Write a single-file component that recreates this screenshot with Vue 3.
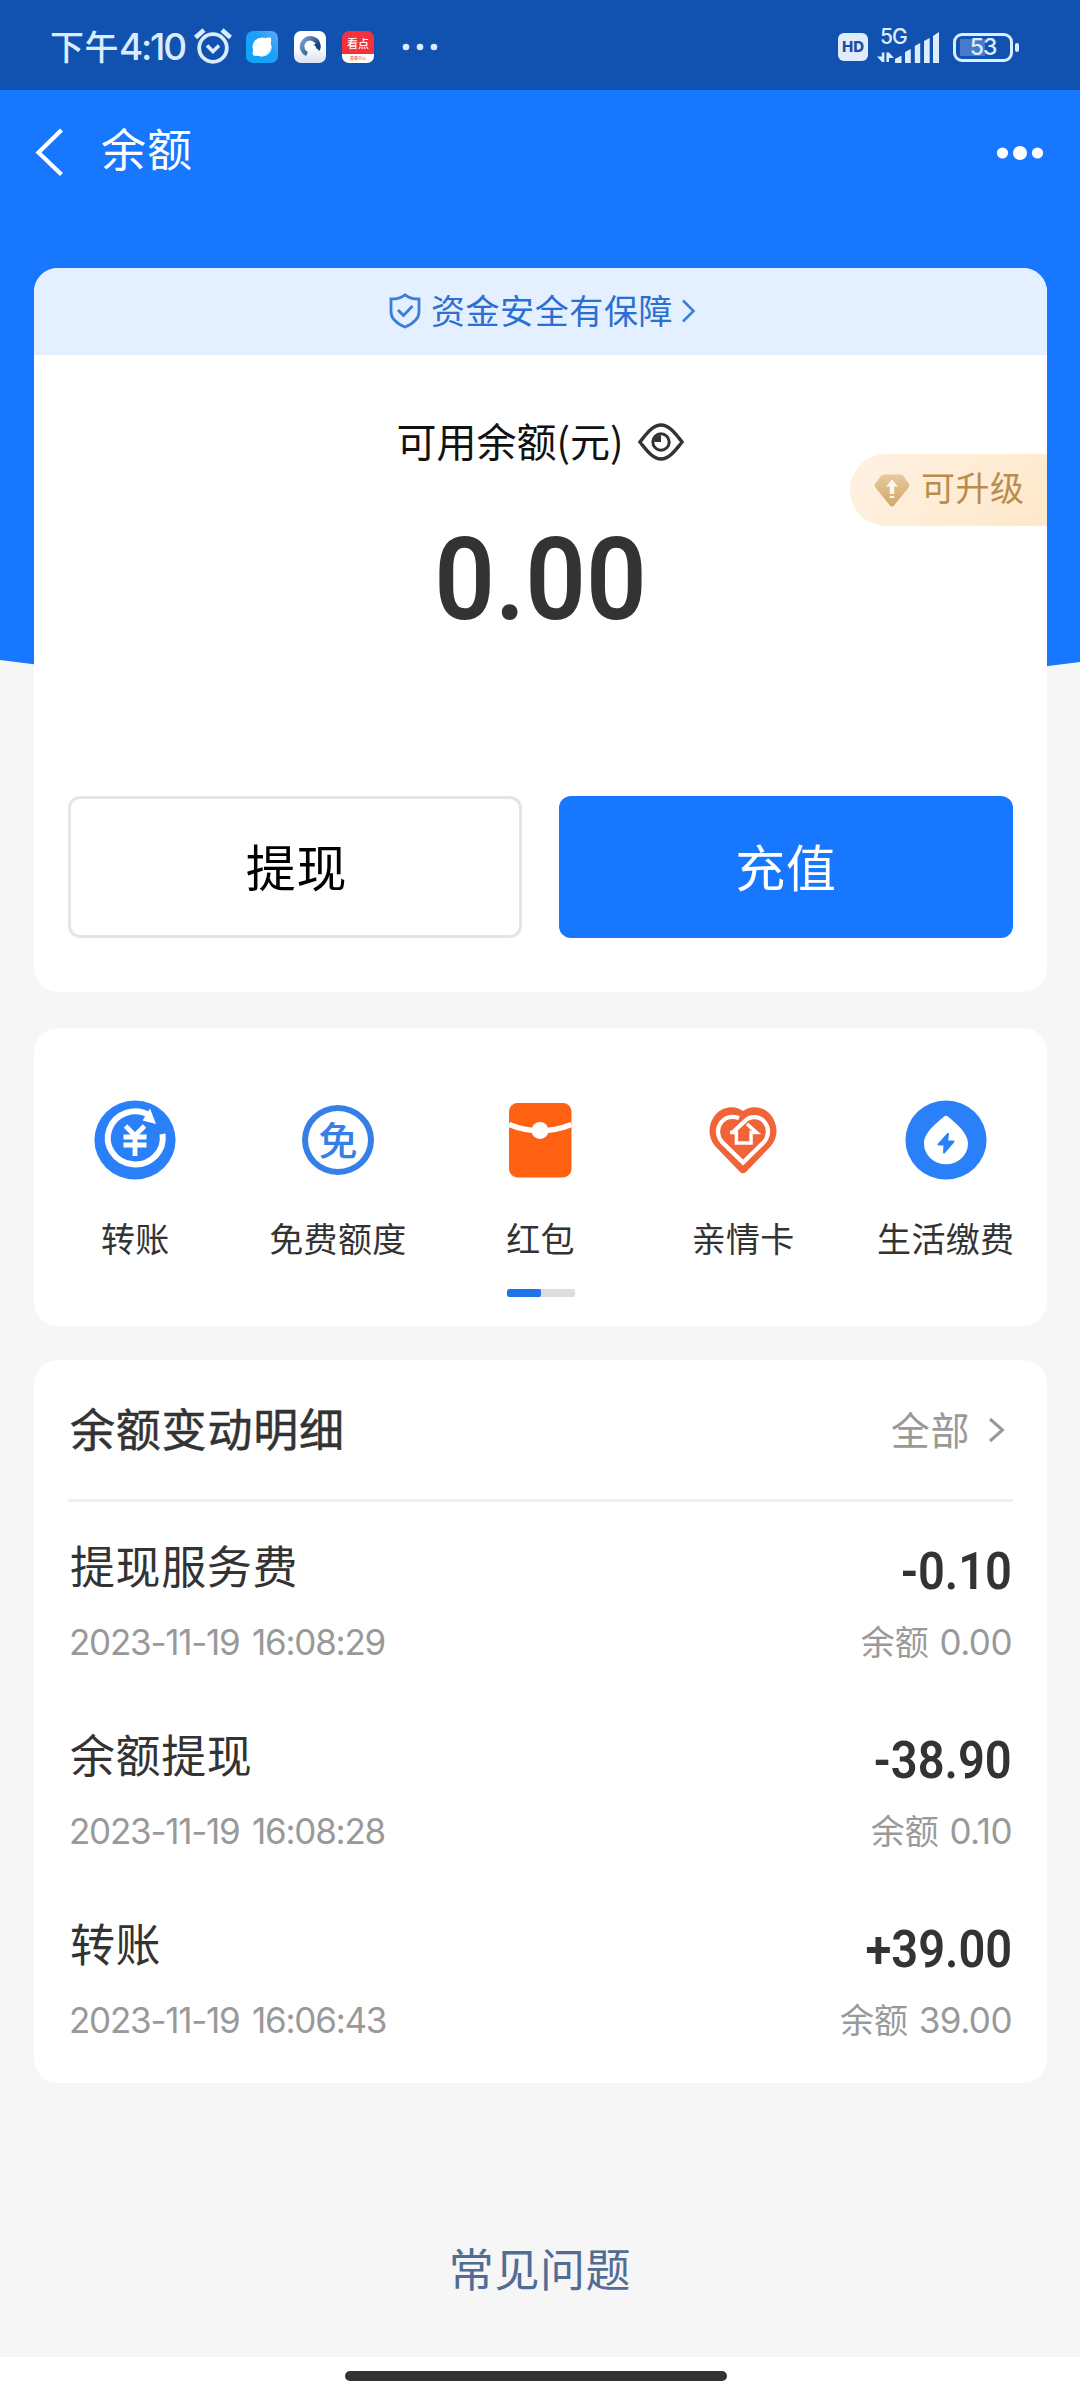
<script setup>
const entries = [
  { title: '提现服务费', time: '2023-11-19 16:08:29', amount: '-0.10', balance: '0.00' },
  { title: '余额提现', time: '2023-11-19 16:08:28', amount: '-38.90', balance: '0.10' },
  { title: '转账', time: '2023-11-19 16:06:43', amount: '+39.00', balance: '39.00' },
]
</script>

<template>
  <div class="page">
    <svg class="hero" width="1080" height="700" viewBox="0 0 1080 700">
      <path d="M0 0H1080V662Q540 732 0 660Z" fill="#1777ff" />
    </svg>

    <div class="status">
      <div class="status-left">
        <span class="clock">下午<span class="clock-num">4:10</span></span>
        <svg class="alarm" width="38" height="36" viewBox="0 0 38 36" fill="none" stroke="#dcecff">
          <circle cx="19" cy="20" r="13.800" stroke-width="3.800" />
          <path d="M1.500 9.500 10 2M36.500 9.500 28 2" stroke-width="4.600" />
          <path d="M13 17.500l6 6 6-6" stroke-width="3.600" />
        </svg>
        <svg class="app" width="32" height="32" viewBox="0 0 32 32">
          <defs>
            <linearGradient id="ga" x1="0" y1="1" x2="1" y2="0"><stop offset="0" stop-color="#0ca6fb" /><stop offset=".6" stop-color="#1f9ef9" /><stop offset="1" stop-color="#63acfa" /></linearGradient>
            <linearGradient id="gb" x1="0" y1="0" x2="0" y2="1"><stop offset=".5" stop-color="#fff" /><stop offset="1" stop-color="#d8e0f0" /></linearGradient>
            <linearGradient id="gc" x1="0" y1="0" x2="1" y2=".6"><stop offset="0" stop-color="#7da3cc" /><stop offset="1" stop-color="#123f80" /></linearGradient>
          </defs>
          <rect width="32" height="32" rx="7" fill="url(#ga)" />
          <circle cx="16" cy="16" r="9.600" fill="#fff" />
          <path d="M7 19.500c-.6 2.500-.5 4 .5 5 2 .8 4 .3 6 .3zM19 7c2.500 0 4-.6 5.800-.3 .6 1.600.2 3.500.2 5.500z" fill="#fff" />
          <path d="M25.600 14c1 7-5 12-12.500 11.500 7-1 10.500-5 12.500-11.500z" fill="#c8e8ff" />
        </svg>
        <svg class="app" width="32" height="32" viewBox="0 0 32 32">
          <rect width="32" height="32" rx="7" fill="url(#gb)" />
          <path d="M13 23A8.200 8.200 0 1 1 24 18" fill="none" stroke="url(#gc)" stroke-width="4.600" />
          <path d="M19 14C22 14.500 23.500 17 25 20.500 26.600 18 26.600 15 25 12z" fill="#17427f" />
        </svg>
        <div class="news"><b>看点</b><i>青春中心</i></div>
        <svg class="more" width="36" height="8" viewBox="0 0 36 8" fill="#dcecff"><circle cx="4" cy="4" r="3.300" /><circle cx="18" cy="4" r="3.300" /><circle cx="32" cy="4" r="3.300" /></svg>
      </div>
      <div class="status-right">
        <span class="hd">HD</span>
        <div class="signal">
          <svg width="64" height="34" viewBox="0 0 64 34" fill="#dcecff">
            <path d="M4.800 22.500V32h2.600V22.500zM0 26.500l5 5.500V26.500zM9.400 22.500H12V32H9.400zM12 22.500l5 5.500h-5z" />
            <path d="M18 33v-4l6.500-3.500V33zM28 33V22l5.800-3v14zM37.800 33V16l5.400-3v20zM47 33V11l5.700-3v25zM56 33V6l6-4v31z" />
          </svg>
          <span class="net">5G</span>
        </div>
        <div class="battery"><span>53</span></div>
      </div>
    </div>

    <header class="nav">
      <svg class="back" width="30" height="50" viewBox="0 0 30 50" fill="none" stroke="#fff" stroke-width="4.200"><path d="M26.500 3 3.500 25.500 26.500 47.500" /></svg>
      <h1>余额</h1>
      <svg width="48" height="16" viewBox="0 0 48 16" fill="#fff"><circle cx="6.500" cy="8" r="5.600" /><circle cx="24" cy="8" r="7" /><circle cx="41.500" cy="8" r="5.600" /></svg>
    </header>

    <section class="card balance">
      <div class="secure">
        <svg width="32" height="36" viewBox="0 0 32 36" fill="none" stroke="#3a7fdc" stroke-width="2.800"><path d="M16 1.800C12 5 7 6 2 6v13c0 7 7 12 14 15 7-3 14-8 14-15V6c-5 0-10-1-14-4.200z" /><path d="M9 17l5.500 5.500L23.500 13" stroke-width="2.900" /></svg>
        <span>资金安全有保障</span>
        <svg width="16" height="24" viewBox="0 0 16 24" fill="none" stroke="#3a7fdc" stroke-width="2.500"><path d="M3 1.500 13.500 12 3 22.500" /></svg>
      </div>
      <div class="label">
        <span>可用余额(元)</span>
        <svg width="46" height="38" viewBox="0 0 46 38" fill="none" stroke="#333" stroke-width="3.400">
          <path d="M1.800 19C7 13 14 2 23 2s16 11 21.200 17C39 25 32 36 23 36S7 25 1.800 19z" stroke-linejoin="round" />
          <circle cx="23" cy="19" r="8.200" stroke-width="3" />
          <path d="M23 12v7h-7A7 7 0 0 1 23 12z" fill="#333" stroke="none" />
        </svg>
      </div>
      <div class="total">0.00</div>
      <div class="buttons">
        <button class="ghost">提现</button>
        <button class="solid">充值</button>
      </div>
      <div class="upgrade">
        <svg width="36" height="35" viewBox="0 0 36 35">
          <defs><linearGradient id="gd" x1="0" y1="0" x2="0" y2="1"><stop offset="0" stop-color="#e6caa0" /><stop offset="1" stop-color="#d3a867" /></linearGradient></defs>
          <path d="M10 1.500h16.500q2 0 3 1.500L35 11q1 1.800-.3 3.500L20 32.500q-2 2-4 0L1.300 14.500q-1.300-1.700-.3-3.500L7 3q1-1.500 3-1.500z" fill="url(#gd)" />
          <path d="M18 6.500l6 7h-3.800V21h-4.400v-7.500H12z" fill="#fff6e8" /><path d="M15.800 23h4.400v2h-4.400z" fill="#fff6e8" />
        </svg>
        <span>可升级</span>
      </div>
    </section>

    <section class="card services">
      <div class="grid">
        <div class="service">
          <svg width="82" height="80" viewBox="0 0 82 80" fill="none">
            <ellipse cx="41" cy="40" rx="40.600" ry="39.500" fill="#2a80f9" />
            <path d="M56 15.500A27.500 26.500 0 1 0 68.500 34" stroke="#fff" stroke-width="6" />
            <path d="M56 8.500l6 15.500-13.500-3.500z" fill="#fff" />
            <path d="M31.500 26l9.500 9.500 9.500-9.500M29.500 37h23M29.500 45h23M41 35v21" stroke="#fff" stroke-width="4.800" />
          </svg>
          <span>转账</span>
        </div>
        <div class="service">
          <div class="free">免</div>
          <span>免费额度</span>
        </div>
        <div class="service">
          <svg width="82" height="80" viewBox="0 0 82 80">
            <rect x="10" y="3" width="62.500" height="74.500" rx="8.500" fill="#fe6111" />
            <path d="M10 24.500Q41 37 72.500 24.500" fill="none" stroke="#fff" stroke-width="5.500" /><circle cx="41" cy="30.500" r="8.500" fill="#fff" />
          </svg>
          <span>红包</span>
        </div>
        <div class="service">
          <svg width="82" height="80" viewBox="0 0 82 80" fill="none">
            <path d="M41 11C48 5 61 6 68 14c8 9 9 22 1 32L44 72q-3 2.500-6 0L13 46C5 36 6 23 14 14 21 6 34 5 41 11z" fill="#f1643a" />
            <path d="M37 18C31 16 24 16.500 19.500 22c-5 6-4.500 14 .5 20L41 62.500 62 42c5-6 5.500-14 .5-20C57 15.500 48 16 43 21L30 33" stroke="#fff" stroke-width="4.200" />
            <path d="M28 32.500H34.500V43H49V32.500H54.500L45 24" stroke="#fff" stroke-width="3.600" />
            <path d="M36.500 31.500 42 26.500 47.200 31.500V41H36.500z" fill="#f1643a" />
          </svg>
          <span>亲情卡</span>
        </div>
        <div class="service">
          <svg width="82" height="80" viewBox="0 0 82 80">
            <ellipse cx="41" cy="40" rx="40.600" ry="39.500" fill="#2a80f9" />
            <path d="M38.500 17Q41 14.500 43.500 17C49 22 63 32 63 43.500A22 20.800 0 0 1 19 43.500C19 32 33 22 38.500 17z" fill="#fff" />
            <path d="M43 34 33.500 44.500h6L39 52.500 48.500 41.500h-6.500z" fill="#2a80f9" stroke="#2a80f9" stroke-width="2" stroke-linejoin="round" />
          </svg>
          <span>生活缴费</span>
        </div>
      </div>
      <div class="pager"><i></i></div>
    </section>

    <section class="card history">
      <div class="history-head">
        <h2>余额变动明细</h2>
        <span class="all">全部</span>
        <svg width="20" height="26" viewBox="0 0 20 26" fill="none" stroke="#999" stroke-width="3"><path d="M3 2 15.500 13 3 24" /></svg>
      </div>
      <div v-for="e in entries" :key="e.time" class="entry">
        <div class="line top"><span class="title">{{ e.title }}</span><span class="amount">{{ e.amount }}</span></div>
        <div class="line sub"><span class="num">{{ e.time }}</span><span>余额 <span class="num">{{ e.balance }}</span></span></div>
      </div>
    </section>

    <div class="faq">常见问题</div>
    <footer><i></i></footer>
  </div>
</template>

<style>
body { margin: 0; background: #f6f6f6; }
</style>

<style scoped>
.page { position: relative; width: 1080px; height: 2400px; overflow: hidden; display: flex; flex-direction: column; background: #f6f6f6; font-family: "Noto Sans CJK SC", sans-serif; color: #333; }
.page svg { display: block; flex: none; }
.hero { position: absolute; left: 0; top: 0; }
.status { position: relative; height: 90px; flex: none; box-sizing: border-box; padding: 4px 61px 0 50px; display: flex; justify-content: space-between; align-items: center; background: #1152b1; color: #dcecff; }
.status-left, .status-right { display: flex; align-items: center; }
.clock { font-size: 34px; line-height: 40px; font-weight: 500; width: 144px; white-space: nowrap; letter-spacing: .5px; margin-top: -2px; }
.clock-num { font-family: Inter, sans-serif; font-size: 37px; font-weight: 500; letter-spacing: -2.200px; }
.alarm { margin: -3px 14px 0 0; }
.app { margin-right: 16px; }
.news { width: 32px; height: 32px; border-radius: 7px; overflow: hidden; background: linear-gradient(#f4323c 0 23px, #fff 23px); display: flex; flex-direction: column; align-items: center; margin-right: 28px; }
.news b { font-size: 11px; line-height: 25px; color: #fff; font-weight: 500; white-space: nowrap; }
.news i { font-size: 4px; line-height: 5px; font-style: normal; color: #d33; }
.hd { width: 30px; height: 28px; border-radius: 6px; background: #e0ebfd; color: #1c4f9f; font: 800 15px/28px Inter, sans-serif; text-align: center; margin-right: 9px; }
.signal { position: relative; margin-right: 12px; }
.net { position: absolute; left: 3px; top: -3px; font: 500 21px/20px Inter, sans-serif; letter-spacing: -1px; }
.battery { position: relative; box-sizing: border-box; width: 60px; height: 29px; border: 3px solid #dcecff; border-radius: 9px; background: linear-gradient(#477ac8, #477ac8) 4px 3px / 25px 17px no-repeat; text-align: center; font: 500 23px/23px Inter, sans-serif; letter-spacing: -1px; margin-right: 6px; }
.battery::after { content: ''; position: absolute; right: -9px; top: 7px; width: 4px; height: 9px; border-radius: 2px; background: #dcecff; }

.nav { position: relative; height: 178px; flex: none; box-sizing: border-box; padding: 36px 36px 0 36px; display: flex; align-items: flex-start; color: #fff; }
.nav .back { margin: 1px 36px 0 -1px; }
.nav h1 { margin: -11px 0 0; font-size: 45px; line-height: 66px; font-weight: 400; flex: 1; letter-spacing: 1px; }
.nav svg:last-child { margin-top: 19px; }

.card { position: relative; width: 1013px; margin: 0 auto 36px 34px; background: #fff; border-radius: 24px; flex: none; box-sizing: border-box; overflow: hidden; }
.balance { height: 724px; display: flex; flex-direction: column; }
.secure { height: 87px; flex: none; box-sizing: border-box; padding-left: 4px; background: #e4efff; color: #2a70d2; display: flex; align-items: center; justify-content: center; font-size: 34px; letter-spacing: .6px; }
.secure span { margin: -2px 7px 0 10px; line-height: 50px; }
.secure > * { transform: translateY(-1px); }
.label { margin-top: 57px; height: 60px; display: flex; align-items: center; justify-content: center; gap: 14px; color: #111; font-size: 40px; padding-right: 1px; }
.label span { margin-top: -5px; }
.total { margin-top: 33px; height: 150px; line-height: 150px; text-align: center; font-family: Roboto, sans-serif; font-weight: 600; font-size: 115px; transform: scaleX(.925); }
.buttons { margin: 141px 34px 0; display: flex; justify-content: space-between; }
.buttons button { width: 454px; height: 142px; box-sizing: border-box; padding: 0 0 4px; border-radius: 12px; font: 400 50px "Noto Sans CJK SC", sans-serif; letter-spacing: .8px; }
.buttons .ghost { background: #fff; border: 3px solid #e5e5e5; color: #000; padding-left: 3px; }
.solid { background: #1777ff; border: 0; color: #fff; }
.upgrade { position: absolute; right: 0; top: 186px; width: 197px; height: 72px; box-sizing: border-box; padding-left: 24px; border-radius: 36px 0 0 36px; background: linear-gradient(135deg, #fff1e3, #fee8c9); display: flex; align-items: center; gap: 11px; font-size: 34px; color: #b98e4c; letter-spacing: .5px; }
.upgrade span { line-height: 50px; margin-top: -6px; }

.services { height: 298px; margin-bottom: 34px; }
.grid { display: grid; grid-template-columns: repeat(5, 1fr); padding-top: 72px; }
.service { display: flex; flex-direction: column; align-items: center; font-size: 34px; }
.service > span { margin-top: 33px; line-height: 50px; white-space: nowrap; letter-spacing: .3px; }
.free { width: 72px; height: 70px; margin: 5px 0; box-sizing: border-box; border: 6px solid #3480e6; border-radius: 50%; color: #3480e6; font-size: 39px; line-height: 54px; text-align: center; font-weight: 500; }
.pager { width: 68px; height: 8px; border-radius: 2px; background: #ddd; margin: 26px auto 0; overflow: hidden; }
.pager i { display: block; width: 34px; height: 8px; background: #1f74e8; border-radius: 2px; }

.history { height: 723px; padding: 0 34px; }
.history-head { height: 142px; box-sizing: border-box; border-bottom: 3px solid #f0f0f0; display: flex; align-items: center; padding: 0 6px 0 2px; }
.history-head h2 { margin: 0; font-size: 45px; font-weight: 400; -webkit-text-stroke: .5px #333; flex: 1; letter-spacing: .8px; line-height: 60px; padding-bottom: 4px; }
.all { font-size: 39px; color: #999; margin-right: 17px; line-height: 60px; padding-bottom: 4px; letter-spacing: .6px; }
.entry { height: 189px; box-sizing: border-box; padding: 31px 1px 0 1px; }
.line { display: flex; justify-content: space-between; align-items: center; white-space: nowrap; }
.top { height: 66px; }
.title { font-size: 45px; letter-spacing: .6px; line-height: 66px; margin: -2px 0 0 1px; }
.amount { font: 600 52px/66px Roboto, sans-serif; transform: scaleX(.905); transform-origin: right; padding-top: 11px; }
.sub { height: 50px; margin-top: 18px; font-size: 34px; color: #999; line-height: 50px; }
.sub > span:last-child { margin-top: -2px; }
.num { font-family: Inter, sans-serif; font-size: 35px; letter-spacing: -1.250px; word-spacing: 4px; }
.sub > span:last-child { word-spacing: 3px; }
.sub > span:last-child .num { letter-spacing: -.5px; }

.faq { margin-top: 116px; text-align: center; font-size: 45px; line-height: 66px; color: #536c94; letter-spacing: .6px; }
footer { position: relative; margin-top: auto; height: 43px; box-sizing: border-box; padding: 0 8px 5px 0; background: #fff; display: flex; justify-content: center; align-items: center; }
footer i { width: 382px; height: 10px; border-radius: 6px; background: #333; }
</style>
